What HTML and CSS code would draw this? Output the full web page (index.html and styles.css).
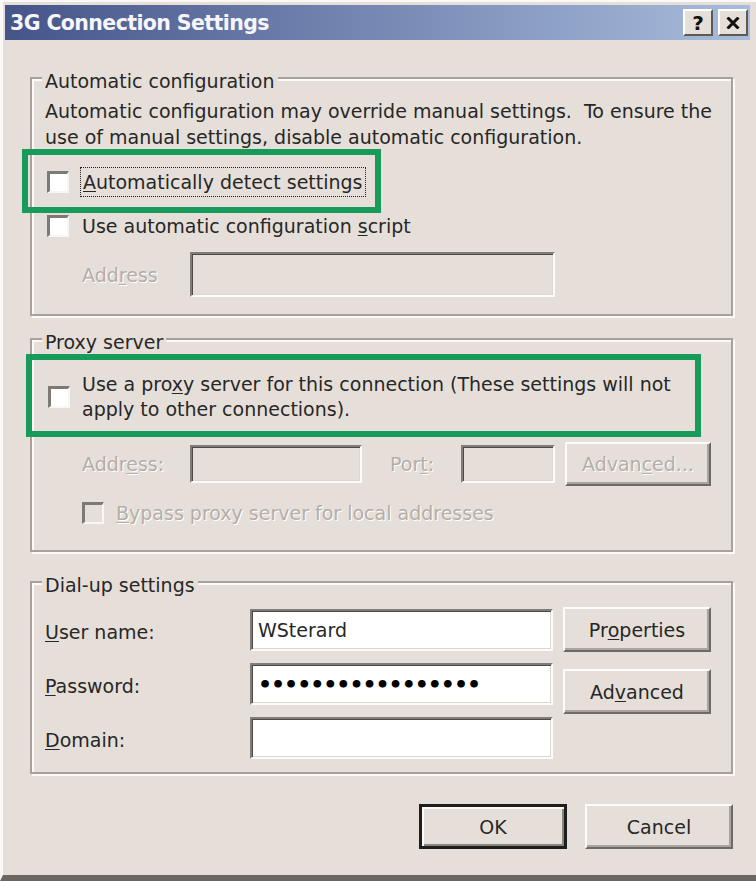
FILE: index.html
```html
<!DOCTYPE html>
<html lang="en">
<head>
  <meta charset="UTF-8">
  <meta name="viewport" content="width=device-width, initial-scale=1.0">
  <title>3G Connection Settings</title>
  <link rel="stylesheet" href="styles.css">
</head>
<body>
  <div class="window">
    <div class="titlebar">
      <span class="title">3G Connection Settings</span>
      <div class="cap-buttons">
        <span class="cap-btn">?</span>
        <span class="cap-btn">
          <svg width="14" height="12" viewBox="0 0 14 12"><path d="M1.5 0.5 L12.5 11.5 M12.5 0.5 L1.5 11.5" stroke="#111" stroke-width="3"/></svg>
        </span>
      </div>
    </div>

    <div class="content">
      <fieldset class="group group-auto">
        <legend>Automatic configuration</legend>
        <p class="desc">Automatic configuration may override manual settings.&nbsp; To ensure the<br>use of manual settings, disable automatic configuration.</p>

        <div class="hl hl-auto">
          <div class="check">
            <span class="box"></span>
            <span class="focus"><u>A</u>utomatically detect settings</span>
          </div>
        </div>

        <div class="check check-script">
          <span class="box"></span>
          <span>Use automatic configuration <u>s</u>cript</span>
        </div>

        <div class="field-row">
          <span class="label disabled">Add<u>r</u>ess</span>
          <span class="textbox off tb-script"></span>
        </div>
      </fieldset>

      <fieldset class="group group-proxy">
        <legend>Proxy server</legend>

        <div class="hl hl-proxy">
          <div class="check multi">
            <span class="box"></span>
            <span>Use a pro<u>x</u>y server for this connection (These settings will not<br>apply to other connections).</span>
          </div>
        </div>

        <div class="field-row proxy-row">
          <span class="label disabled">Addr<u>e</u>ss:</span>
          <span class="textbox off tb-addr"></span>
          <span class="label port disabled">Por<u>t</u>:</span>
          <span class="textbox off tb-port"></span>
          <span class="btn btn-adv disabled">Advan<u>c</u>ed...</span>
        </div>

        <div class="check check-bypass disabled">
          <span class="box off"></span>
          <span><u>B</u>ypass proxy server for local addresses</span>
        </div>
      </fieldset>

      <fieldset class="group group-dial">
        <legend>Dial-up settings</legend>
        <div class="dial">
          <div class="dial-fields">
            <span class="label"><u>U</u>ser name:</span>
            <span class="textbox">WSterard</span>
            <span class="label"><u>P</u>assword:</span>
            <span class="textbox"><span class="dots">&bull;&bull;&bull;&bull;&bull;&bull;&bull;&bull;&bull;&bull;&bull;&bull;&bull;&bull;&bull;&bull;&bull;</span></span>
            <span class="label"><u>D</u>omain:</span>
            <span class="textbox"></span>
          </div>
          <div class="dial-buttons">
            <span class="btn btn-side">Pr<u>o</u>perties</span>
            <span class="btn btn-side">Ad<u>v</u>anced</span>
          </div>
        </div>
      </fieldset>

      <div class="actions">
        <span class="btn btn-main btn-default">OK</span>
        <span class="btn btn-main">Cancel</span>
      </div>
    </div>
  </div>
</body>
</html>
```

FILE: styles.css
```css
body {
  margin: 0;
  background-color: #e6dfd9;
  font-family: "DejaVu Sans", "Noto Sans", sans-serif;
  font-size: 19px;
  color: #272727;
}

.window {
  width: 756px;
  height: 881px;
  box-sizing: border-box;
  border-top: 2px solid #fbf9f7;
  border-left: 3px solid #fbf9f7;
  border-bottom: 6px solid #6b6661;
  padding: 3px 6px 0 2px;
  display: flex;
  flex-direction: column;
}

.titlebar {
  height: 35px;
  display: flex;
  align-items: center;
  justify-content: space-between;
  padding: 0 2px 0 5px;
  background: linear-gradient(90deg, #45558a, #a8bcdc);
}

.title {
  font-weight: bold;
  font-size: 20.5px;
  letter-spacing: -0.6px;
  color: #f6f6fa;
}

.cap-buttons {
  display: flex;
  gap: 5px;
}

.cap-btn {
  width: 30px;
  height: 27px;
  box-sizing: border-box;
  display: flex;
  align-items: center;
  justify-content: center;
  background: #e6dfd9;
  border: 2px solid;
  border-color: #fff #5d5955 #5d5955 #fff;
  font-weight: bold;
  font-size: 20px;
  color: #111;
}

.content {
  flex: 1;
  display: flex;
  flex-direction: column;
  padding: 24px 17px 0 25px;
}

.group {
  margin: 0;
  padding: 0 13px;
  min-width: 0;
  border: 2px solid #a7a09b;
  box-shadow: inset 2px 2px 0 #fbfaf9, 2px 2px 0 #fbfaf9;
}

.group legend {
  padding: 6px 3px 0;
  margin-left: -3px;
  line-height: 22px;
  background: #e6dfd9;
}

.group-auto {
  padding-bottom: 17px;
}

.group-proxy {
  margin-top: 9px;
  padding-bottom: 24px;
}

.group-dial {
  margin-top: 16px;
  padding-bottom: 13px;
}

.desc {
  margin: 6px 0 0;
  line-height: 26px;
}

u {
  text-decoration-thickness: 1px;
  text-underline-offset: 2px;
}

.disabled {
  color: #b4ada8;
  text-shadow: 1px 1px 0 #fff;
}

/* green annotation frames */
.hl {
  box-sizing: border-box;
  border: 6px solid #179a5a;
}

.hl-auto {
  width: 359px;
  margin: -1px 0 0 -23px;
  padding: 12px 0 10px 19px;
}

.hl-proxy {
  width: 675px;
  margin: 1px 0 0 -19px;
  padding: 12px 0 9px 16px;
}

.check {
  display: flex;
  align-items: center;
  gap: 13px;
  line-height: 26px;
}

.hl-auto .check {
  gap: 11px;
}

.multi {
  gap: 12px;
  line-height: 25px;
}

.check-script {
  margin-left: 2px;
}

.check-bypass {
  margin: 14px 0 0 37px;
  gap: 12px;
}

.box {
  flex: none;
  width: 22px;
  height: 22px;
  box-sizing: border-box;
  border: solid;
  border-width: 3px 2px 2px 3px;
  border-color: #7f7975 #f9f7f5 #f9f7f5 #7f7975;
  background: #fff;
}

.box.off {
  background: #e6dfd9;
}

.focus {
  padding: 1px 2px;
  border: 1px dotted #222;
}

.field-row {
  display: flex;
  align-items: center;
  margin-top: 13px;
  padding-left: 37px;
  line-height: 26px;
}

.label {
  flex: none;
  width: 108px;
}

.textbox {
  box-sizing: border-box;
  display: flex;
  align-items: center;
  padding-left: 6px;
  background: #fff;
  border: 2px solid;
  border-color: #827c78 #fdfcfb #fdfcfb #827c78;
  box-shadow: inset 1px 1px 0 #4d4946, inset -1px -1px 0 #ddd7d2;
}

.textbox.off {
  background: #e6dfd9;
}

.tb-script {
  width: 365px;
  height: 45px;
}

.proxy-row {
  margin-top: 5px;
}

.tb-addr {
  width: 172px;
  height: 38px;
}

.port {
  width: 71px;
  margin-left: 28px;
}

.tb-port {
  width: 94px;
  height: 38px;
}

.btn {
  box-sizing: border-box;
  display: flex;
  align-items: center;
  justify-content: center;
  background: #e6dfd9;
  border: 2px solid;
  border-color: #fdfcfb #6e6965 #6e6965 #fdfcfb;
  box-shadow: inset -2px -2px 0 #aaa39e;
  color: #272727;
}

.btn.disabled {
  color: #b4ada8;
}

.btn-adv {
  width: 146px;
  height: 44px;
  margin-left: 10px;
}

.dial {
  display: flex;
  align-items: flex-start;
  margin-top: 11px;
}

.dial-fields {
  display: grid;
  grid-template-columns: 205px 303px;
  grid-auto-rows: 42px;
  row-gap: 12px;
  align-items: center;
  margin-top: 2px;
}

.dial-fields .label {
  width: auto;
  padding-top: 3px;
}

.dial-fields .textbox {
  height: 42px;
}

.dots {
  font-size: 22px;
  font-weight: bold;
  color: #000;
  letter-spacing: -1px;
}

.dial-buttons {
  display: flex;
  flex-direction: column;
  gap: 17px;
  margin-left: 10px;
}

.btn-side {
  width: 148px;
  height: 45px;
}

.actions {
  display: flex;
  justify-content: flex-end;
  gap: 18px;
  margin-top: 30px;
}

.btn-main {
  width: 148px;
  height: 45px;
}

.btn-default {
  border: 3px solid #1e1e1e;
  box-shadow: inset 2px 2px 0 #fbfaf9, inset -2px -2px 0 #8a847f;
}
```
